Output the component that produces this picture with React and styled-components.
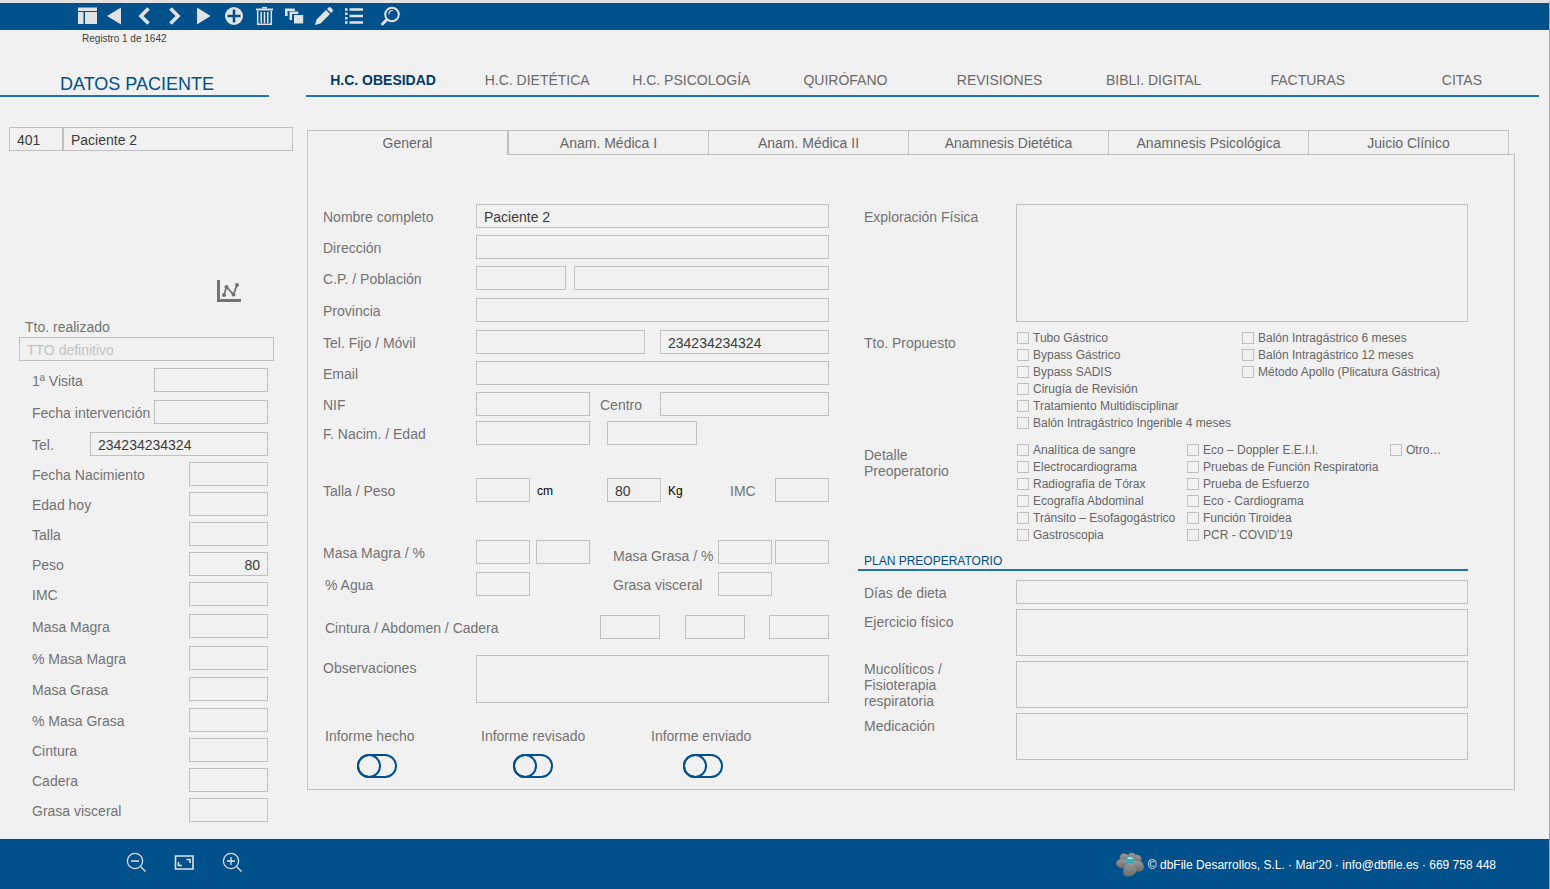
import React from "react";
import styled, { createGlobalStyle } from "styled-components";

const colors = {
  blue: "#00508c",
  line: "#1d74bd",
  border: "#c0c0c0",
  page: "#f1f1f1",
  label: "#737373",
  text: "#3c3c3c",
  icon: "#e2e2e2",
};

const GlobalStyle = createGlobalStyle`
  *, *::before {
    box-sizing: border-box;
  }
  body {
    margin: 0;
    background: ${colors.page};
    color: ${colors.label};
    font-family: "Liberation Sans", Arial, sans-serif;
    font-size: 14px;
    line-height: 16px;
  }
  button, input, textarea {
    font: inherit;
  }
`;

const Page = styled.div`
  min-height: 100vh;
  display: flex;
  flex-direction: column;
  border-top: 3px solid #e2e2e2;
  border-right: 1px solid #a6a6a6;
`;

const Toolbar = styled.header`
  display: flex;
  height: 27px;
  padding-left: 72px;
  background: ${colors.blue};
`;

const ToolButton = styled.button`
  width: 30px;
  height: 27px;
  padding: 0;
  border: 0;
  background: none;
  color: ${colors.icon};
  &:last-child {
    margin-left: 6px;
  }
  svg {
    display: block;
  }
`;

const Content = styled.div`
  flex: 1;
  display: flex;
  gap: 13px;
  padding-bottom: 16px;
`;

const Sidebar = styled.aside`
  width: 293px;
  flex: none;
`;

const RecordCount = styled.p`
  height: 16px;
  margin: 0;
  padding-left: 82px;
  font-size: 10px;
  line-height: 18px;
  color: #404040;
`;

const SideTitle = styled.h1`
  width: 269px;
  height: 51px;
  margin: 0 0 30px;
  padding: 28px 0 0 60px;
  border-bottom: 2px solid ${colors.line};
  font-size: 18px;
  font-weight: normal;
  line-height: 20px;
  color: ${colors.blue};
`;

const Input = styled.input`
  width: ${(props) => props.$width || "100%"};
  min-width: 0;
  height: 24px;
  padding: 2px 7px 0;
  border: 1px solid ${colors.border};
  border-radius: 0;
  background: transparent;
  color: ${colors.text};
  text-align: ${(props) => props.$align || "left"};
  outline: none;
  &::placeholder {
    color: #c3c3c3;
    opacity: 1;
  }
  &:focus {
    border-color: ${colors.line};
  }
`;

const TextArea = styled.textarea`
  display: block;
  width: 100%;
  height: ${(props) => props.$height};
  padding: 4px 7px;
  border: 1px solid ${colors.border};
  border-radius: 0;
  background: transparent;
  color: ${colors.text};
  resize: none;
  outline: none;
`;

const PatientId = styled.div`
  display: grid;
  grid-template-columns: 54px 1fr;
  padding-left: 9px;
  margin-bottom: 127px;
`;

const ChartButton = styled.button`
  display: block;
  margin: 0 0 17px 216px;
  padding: 0;
  border: 0;
  background: none;
  color: ${colors.label};
  svg {
    display: block;
  }
`;

const Treatment = styled.div`
  display: flex;
  flex-direction: column;
  gap: 2px;
  padding: 0 19px;
  margin-bottom: 7px;
  label {
    padding-left: 6px;
  }
`;

const SideRow = styled.div`
  display: flex;
  justify-content: space-between;
  align-items: center;
  margin: 0 25px ${(props) => props.$after || "6px"} 32px;
  label {
    padding-top: 2px;
    white-space: nowrap;
  }
`;

const Main = styled.main`
  flex: 1;
  min-width: 0;
  padding: 30px 10px 0 0;
`;

const Nav = styled.nav`
  display: grid;
  grid-template-columns: repeat(8, 1fr);
  height: 37px;
  margin-bottom: 33px;
  border-bottom: 2px solid ${colors.line};
`;

const NavLink = styled.a`
  padding-top: 12px;
  text-align: center;
  text-decoration: none;
  color: ${(props) => (props.$active ? "#003a6a" : "#6a6a6a")};
  font-weight: ${(props) => (props.$active ? "bold" : "normal")};
`;

const Tabs = styled.div`
  display: flex;
  margin: 0 30px -1px 1px;
`;

const Tab = styled.button`
  flex: 1;
  height: 25px;
  padding: 0;
  border: 1px solid ${colors.border};
  border-width: ${(props) => (props.$active ? "1px 1px 0 1px" : "1px 0 1px 1px")};
  background: ${colors.page};
  color: #666;
  &:last-child {
    border-right-width: 1px;
  }
`;

const Panel = styled.section`
  position: relative;
  z-index: -1;
  display: grid;
  grid-template-columns: 506fr 604fr;
  gap: 35px;
  margin: 0 24px 0 1px;
  padding: 49px 46px 11px 15px;
  border: 1px solid ${colors.border};
`;

const PanelLayer = styled.div`
  position: relative;
  z-index: 0;
`;

const FormRow = styled.div`
  display: grid;
  grid-template-columns: ${(props) => props.$label || "153px"} 1fr;
  margin-bottom: ${(props) => props.$after || "7px"};
`;

const Label = styled.label`
  padding: 5px 0 0 ${(props) => (props.$indent ? "2px" : "0")};
  white-space: nowrap;
`;

const Fields = styled.div`
  display: grid;
  grid-template-columns: ${(props) => props.$columns || "1fr"};
`;

const InnerLabel = styled.label`
  padding-top: 5px;
  padding-left: ${(props) => props.$left || "0"};
  white-space: nowrap;
`;

const LowLabel = styled(InnerLabel)`
  align-self: end;
`;

const Unit = styled.span`
  padding: 5px 0 0 7px;
  font-size: 12px;
  color: #000;
`;

const Reports = styled.div`
  display: grid;
  grid-template-columns: 156px 170px 1fr;
  margin-top: 25px;
  padding-left: 2px;
`;

const ReportToggle = styled.label`
  display: flex;
  flex-direction: column;
  gap: 10px;
`;

const Switch = styled.input`
  appearance: none;
  width: 40px;
  height: 24px;
  margin: 0 0 0 32px;
  border: 2px solid ${colors.blue};
  border-radius: 12px;
  &::before {
    content: "";
    display: block;
    width: 24px;
    height: 24px;
    margin: -2px;
    border: 2px solid ${colors.blue};
    border-radius: 50%;
  }
  &:checked::before {
    margin-left: 14px;
  }
`;

const Checks = styled.div`
  display: grid;
  grid-template-columns: ${(props) => props.$columns};
  align-items: start;
  padding-left: 1px;
  margin-bottom: ${(props) => props.$after};
`;

const CheckList = styled.div`
  display: flex;
  flex-direction: column;
`;

const Check = styled.label`
  display: flex;
  align-items: center;
  gap: 4px;
  height: 17px;
  font-size: 12px;
  white-space: nowrap;
  color: #666;
  input {
    appearance: none;
    flex: none;
    width: 12px;
    height: 12px;
    margin: 0;
    border: 1px solid ${colors.border};
  }
  input:checked {
    background: ${colors.blue};
  }
`;

const GroupLabel = styled.span`
  padding-top: 6px;
`;

const PlanTitle = styled.h2`
  margin: 0 0 9px -6px;
  padding: 0 0 0 6px;
  border-bottom: 2px solid ${colors.line};
  font-size: 12px;
  font-weight: normal;
  line-height: 16px;
  color: ${colors.blue};
`;

const PlanRow = styled(FormRow)`
  grid-template-columns: 152px 1fr;
  margin-bottom: 5px;
  label {
    white-space: normal;
    padding-top: ${(props) => (props.$tall ? "0" : "5px")};
    padding-right: 60px;
    margin-bottom: -1px;
  }
`;

const Footer = styled.footer`
  display: flex;
  justify-content: space-between;
  align-items: center;
  height: 50px;
  padding: 0 53px 0 124px;
  background: ${colors.blue};
  color: #fff;
  font-size: 12px;
`;

const ZoomButtons = styled.div`
  display: flex;
  gap: 24px;
  padding-bottom: 4px;
`;

const ZoomButton = styled.button`
  padding: 0;
  border: 0;
  background: none;
  color: ${colors.icon};
  svg {
    display: block;
  }
`;

const Credits = styled.p`
  display: flex;
  align-items: center;
  gap: 4px;
  margin: 0;
  padding-top: 1px;
`;

const tools = [
  {
    name: "Vista",
    icon: <path d="M6 4.500h19v3.500H6zM6 9h5.500v12H6zM13 9h12v12H13z" fill="currentColor" />,
  },
  { name: "Primero", icon: <path d="M5 13 19 4.500v17z" fill="currentColor" /> },
  {
    name: "Anterior",
    icon: <path d="M16.500 5.500 9 13l7.500 7.500" fill="none" stroke="currentColor" strokeWidth="3.600" />,
  },
  {
    name: "Siguiente",
    icon: <path d="M8.500 5.500 16 13l-7.500 7.500" fill="none" stroke="currentColor" strokeWidth="3.600" />,
  },
  { name: "Último", icon: <path d="M5 4.500v17L18.500 13z" fill="currentColor" /> },
  {
    name: "Nuevo",
    icon: (
      <>
        <circle cx="12" cy="13" r="9" fill="currentColor" />
        <path d="M12 6.500v13M5.500 13h13" stroke={colors.blue} strokeWidth="2.600" />
      </>
    ),
  },
  {
    name: "Eliminar",
    icon: (
      <g fill="none" stroke="currentColor">
        <path d="M4 6.500h17" strokeWidth="2" />
        <path d="M10 4.700h5" strokeWidth="1.600" />
        <path d="M5.700 8v13.200h13.600V8M9.200 9v11M12.500 9v11M15.800 9v11" strokeWidth="1.500" />
      </g>
    ),
  },
  {
    name: "Duplicar",
    icon: (
      <>
        <path d="M4.300 13V6.700h8.500M8.800 17V9.800h7.400" fill="none" stroke="currentColor" strokeWidth="2.600" />
        <path d="M12 12h9.200v8.500H12z" fill="currentColor" />
      </>
    ),
  },
  {
    name: "Editar",
    icon: (
      <path
        d="M3 22l1.500-5.500L14 7l4 4-9.500 9.500zM15 6l1.600-1.600q1-.8 2 0l2 2q.8 1 0 2L19 10z"
        fill="currentColor"
      />
    ),
  },
  {
    name: "Lista",
    icon: (
      <path
        d="M3 6.500h2.500M3 10.800h2.500M3 15.200h2.500M3 19.500h2.500M7.500 6.500H21M7.500 13H21M7.500 19.500H21"
        stroke="currentColor"
        strokeWidth="2.400"
      />
    ),
  },
  {
    name: "Buscar",
    icon: (
      <g fill="none" stroke="currentColor" strokeLinecap="round">
        <circle cx="14" cy="11.500" r="6.800" strokeWidth="2" />
        <path d="M8.500 17l-4 4" strokeWidth="3" />
        <path d="M11 11a3.500 3.500 0 0 1 3.500-3.500" strokeWidth="1.200" />
      </g>
    ),
  },
];

const sections = [
  "H.C. OBESIDAD",
  "H.C. DIETÉTICA",
  "H.C. PSICOLOGÍA",
  "QUIRÓFANO",
  "REVISIONES",
  "BIBLI. DIGITAL",
  "FACTURAS",
  "CITAS",
];

const tabs = [
  "General",
  "Anam. Médica I",
  "Anam. Médica II",
  "Anamnesis Dietética",
  "Anamnesis Psicológica",
  "Juicio Clínico",
];

const sideFields = [
  { label: "1ª Visita", width: "114px", after: "8px" },
  { label: "Fecha intervención", width: "114px", after: "8px" },
  { label: "Tel.", width: "178px", value: "234234234324" },
  { label: "Fecha Nacimiento" },
  { label: "Edad hoy" },
  { label: "Talla" },
  { label: "Peso", value: "80", align: "right" },
  { label: "IMC", after: "8px" },
  { label: "Masa Magra", after: "8px" },
  { label: "% Masa Magra", after: "7px" },
  { label: "Masa Grasa", after: "7px" },
  { label: "% Masa Grasa" },
  { label: "Cintura" },
  { label: "Cadera" },
  { label: "Grasa visceral", after: "0px" },
];

const treatments = [
  [
    "Tubo Gástrico",
    "Bypass Gástrico",
    "Bypass SADIS",
    "Cirugía de Revisión",
    "Tratamiento Multidisciplinar",
    "Balón Intragástrico Ingerible 4 meses",
  ],
  [
    "Balón Intragástrico 6 meses",
    "Balón Intragástrico 12 meses",
    "Método Apollo (Plicatura Gástrica)",
  ],
];

const preop = [
  [
    "Analítica de sangre",
    "Electrocardiograma",
    "Radiografía de Tórax",
    "Ecografía Abdominal",
    "Tránsito – Esofagogástrico",
    "Gastroscopia",
  ],
  [
    "Eco – Doppler E.E.I.I.",
    "Pruebas de Función Respiratoria",
    "Prueba de Esfuerzo",
    "Eco - Cardiograma",
    "Función Tiroidea",
    "PCR - COVID'19",
  ],
  ["Otro…"],
];

const plan = [
  { id: "ejercicio", label: "Ejercicio físico" },
  { id: "mucoliticos", label: "Mucolíticos / Fisioterapia respiratoria", tall: true },
  { id: "medicacion", label: "Medicación" },
];

const CheckGroup = ({ lists, columns, after }) => (
  <Checks $columns={columns} $after={after}>
    {lists.map((list) => (
      <CheckList key={list[0]}>
        {list.map((item) => (
          <Check key={item}>
            <input type="checkbox" />
            {item}
          </Check>
        ))}
      </CheckList>
    ))}
  </Checks>
);

const PatientSidebar = () => (
  <Sidebar>
    <RecordCount>Registro 1 de 1642</RecordCount>
    <SideTitle>DATOS PACIENTE</SideTitle>
    <PatientId>
      <Input aria-label="Número" defaultValue="401" />
      <Input aria-label="Paciente" defaultValue="Paciente 2" />
    </PatientId>
    <ChartButton aria-label="Gráfica">
      <svg width="25" height="24" viewBox="0 0 25 24">
        <path d="M2.500 2v20.500H25" fill="none" stroke="currentColor" strokeWidth="3" />
        <path d="M8 17 10.500 9 17.500 16.500 21 7" fill="none" stroke="currentColor" strokeWidth="1.800" />
        <g fill="currentColor">
          <circle cx="8" cy="17" r="2" />
          <circle cx="10.500" cy="9" r="2" />
          <circle cx="17.500" cy="16.500" r="2" />
          <circle cx="21" cy="7" r="2" />
        </g>
      </svg>
    </ChartButton>
    <Treatment>
      <label htmlFor="tto">Tto. realizado</label>
      <Input id="tto" placeholder="TTO definitivo" />
    </Treatment>
    {sideFields.map((field, i) => (
      <SideRow key={field.label} $after={field.after}>
        <label htmlFor={`side-${i}`}>{field.label}</label>
        <Input
          id={`side-${i}`}
          $width={field.width || "79px"}
          $align={field.align}
          defaultValue={field.value}
        />
      </SideRow>
    ))}
  </Sidebar>
);

const PersonalForm = () => (
  <div>
    <FormRow>
      <Label htmlFor="nombre">Nombre completo</Label>
      <Input id="nombre" defaultValue="Paciente 2" />
    </FormRow>
    <FormRow>
      <Label htmlFor="direccion">Dirección</Label>
      <Input id="direccion" />
    </FormRow>
    <FormRow $after="8px">
      <Label htmlFor="cp">C.P. / Población</Label>
      <Fields $columns="90px 8px 1fr">
        <Input id="cp" />
        <span />
        <Input aria-label="Población" />
      </Fields>
    </FormRow>
    <FormRow $after="8px">
      <Label htmlFor="provincia">Provincia</Label>
      <Input id="provincia" />
    </FormRow>
    <FormRow>
      <Label htmlFor="fijo">Tel. Fijo / Móvil</Label>
      <Fields $columns="1fr 15px 1fr">
        <Input id="fijo" />
        <span />
        <Input aria-label="Móvil" defaultValue="234234234324" />
      </Fields>
    </FormRow>
    <FormRow>
      <Label htmlFor="email">Email</Label>
      <Input id="email" />
    </FormRow>
    <FormRow $after="5px">
      <Label htmlFor="nif">NIF</Label>
      <Fields $columns="114px 70px 1fr">
        <Input id="nif" />
        <InnerLabel htmlFor="centro" $left="10px">
          Centro
        </InnerLabel>
        <Input id="centro" />
      </Fields>
    </FormRow>
    <FormRow $after="33px">
      <Label htmlFor="nacim">F. Nacim. / Edad</Label>
      <Fields $columns="114px 17px 90px">
        <Input id="nacim" />
        <span />
        <Input aria-label="Edad" />
      </Fields>
    </FormRow>
    <FormRow $after="38px">
      <Label htmlFor="talla">Talla / Peso</Label>
      <Fields $columns="54px 77px 54px 1fr 45px 54px">
        <Input id="talla" />
        <Unit>cm</Unit>
        <Input aria-label="Peso" defaultValue="80" />
        <Unit>Kg</Unit>
        <InnerLabel htmlFor="imc">IMC</InnerLabel>
        <Input id="imc" />
      </Fields>
    </FormRow>
    <FormRow $after="8px">
      <Label htmlFor="magra">Masa Magra / %</Label>
      <Fields $columns="54px 6px 54px 1fr 54px 3px 54px">
        <Input id="magra" />
        <span />
        <Input aria-label="Masa Magra %" />
        <LowLabel htmlFor="grasa" $left="23px">
          Masa Grasa / %
        </LowLabel>
        <Input id="grasa" />
        <span />
        <Input aria-label="Masa Grasa %" />
      </Fields>
    </FormRow>
    <FormRow $after="19px">
      <Label htmlFor="agua" $indent>
        % Agua
      </Label>
      <Fields $columns="54px 1fr 54px 57px">
        <Input id="agua" />
        <InnerLabel htmlFor="visceral" $left="83px">
          Grasa visceral
        </InnerLabel>
        <Input id="visceral" />
      </Fields>
    </FormRow>
    <FormRow $label="277px" $after="16px">
      <Label htmlFor="cintura" $indent>
        Cintura / Abdomen / Cadera
      </Label>
      <Fields $columns="60px 1fr 60px 1fr 60px">
        <Input id="cintura" />
        <span />
        <Input aria-label="Abdomen" />
        <span />
        <Input aria-label="Cadera" />
      </Fields>
    </FormRow>
    <FormRow>
      <Label htmlFor="observaciones">Observaciones</Label>
      <TextArea id="observaciones" $height="48px" />
    </FormRow>
    <Reports>
      <ReportToggle>
        Informe hecho
        <Switch type="checkbox" />
      </ReportToggle>
      <ReportToggle>
        Informe revisado
        <Switch type="checkbox" />
      </ReportToggle>
      <ReportToggle>
        Informe enviado
        <Switch type="checkbox" />
      </ReportToggle>
    </Reports>
  </div>
);

const ClinicalForm = () => (
  <div>
    <FormRow $label="152px">
      <Label htmlFor="exploracion">Exploración Física</Label>
      <TextArea id="exploracion" $height="118px" />
    </FormRow>
    <FormRow $label="152px" $after="0px">
      <GroupLabel>Tto. Propuesto</GroupLabel>
      <CheckGroup lists={treatments} columns="225px 1fr" after="10px" />
    </FormRow>
    <FormRow $label="152px" $after="0px">
      <GroupLabel>
        Detalle
        <br />
        Preoperatorio
      </GroupLabel>
      <CheckGroup lists={preop} columns="170px 203px 1fr" after="10px" />
    </FormRow>
    <PlanTitle>PLAN PREOPERATORIO</PlanTitle>
    <PlanRow>
      <Label htmlFor="dieta">Días de dieta</Label>
      <Input id="dieta" />
    </PlanRow>
    {plan.map((item) => (
      <PlanRow key={item.id} $tall={item.tall}>
        <Label htmlFor={item.id}>{item.label}</Label>
        <TextArea id={item.id} $height="47px" />
      </PlanRow>
    ))}
  </div>
);

const Flower = () => (
  <svg width="28" height="25" viewBox="0 0 28 25">
    <defs>
      <linearGradient id="petal" x1="0" y1="0" x2="0" y2="1">
        <stop offset="0" stopColor="#9c9c9c" />
        <stop offset="1" stopColor="#6c6c6c" />
      </linearGradient>
    </defs>
    <g fill="url(#petal)" stroke="#62676b" strokeWidth="0.4">
      <path d="M12 3q2-3 5-2 4 1 3 6l-5 4-4-4z" />
      <path d="M4 4q2-4 6-2l4 2v8L4 8z" />
      <path d="M2 8q7-3 12 2l-4 6q-6 1-9-2-2-4 1-6z" />
      <path d="M14 9l5-6q4-1 6 2 1 3-1 6z" />
      <path d="M14 9q8-2 12 1 3 4 1 8-4 3-8 0z" />
      <path d="M9 13q5-5 9-1l3 6q-2 5-6 6-5 1-7-1-2-4 1-10z" />
    </g>
    <ellipse cx="14" cy="8" rx="4" ry="3.600" fill="#2fb0b8" />
    <path d="M10.500 7q3.500-4 7 0z" fill="#a9e4e6" />
  </svg>
);

const App = () => {
  return (
    <Page>
      <GlobalStyle />
      <Toolbar>
        {tools.map((tool) => (
          <ToolButton key={tool.name} aria-label={tool.name}>
            <svg width="30" height="27" viewBox="0 0 30 27">
              {tool.icon}
            </svg>
          </ToolButton>
        ))}
      </Toolbar>
      <Content>
        <PatientSidebar />
        <Main>
          <Nav>
            {sections.map((section, i) => (
              <NavLink key={section} href="#" $active={i === 0}>
                {section}
              </NavLink>
            ))}
          </Nav>
          <PanelLayer>
            <Tabs role="tablist">
              {tabs.map((tab, i) => (
                <Tab key={tab} role="tab" aria-selected={i === 0} $active={i === 0}>
                  {tab}
                </Tab>
              ))}
            </Tabs>
            <Panel>
              <PersonalForm />
              <ClinicalForm />
            </Panel>
          </PanelLayer>
        </Main>
      </Content>
      <Footer>
        <ZoomButtons>
          <ZoomButton aria-label="Alejar">
            <svg width="24" height="24" viewBox="0 0 24 24" fill="none" stroke="currentColor" strokeWidth="1.300">
              <circle cx="11" cy="11" r="7.600" />
              <path d="M16.500 16.500 21.500 21.500M7 11h8" />
            </svg>
          </ZoomButton>
          <ZoomButton aria-label="Ajustar">
            <svg width="24" height="24" viewBox="0 0 24 24" fill="none" stroke="currentColor" strokeWidth="1.600">
              <path d="M3.500 6h17.500v13H3.500zM14.500 9.500H18V13M6.500 12v3.500H10" />
            </svg>
          </ZoomButton>
          <ZoomButton aria-label="Acercar">
            <svg width="24" height="24" viewBox="0 0 24 24" fill="none" stroke="currentColor" strokeWidth="1.300">
              <circle cx="11" cy="11" r="7.600" />
              <path d="M16.500 16.500 21.500 21.500M7 11h8M11 7v8" />
            </svg>
          </ZoomButton>
        </ZoomButtons>
        <Credits>
          <Flower />
          © dbFile Desarrollos, S.L. · Mar'20 · info@dbfile.es · 669 758 448
        </Credits>
      </Footer>
    </Page>
  );
};

export default App;
